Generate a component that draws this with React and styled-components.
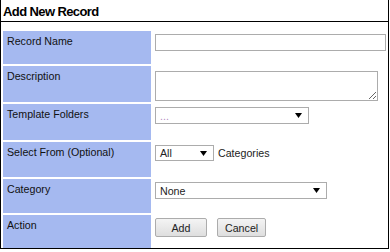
import styled, { createGlobalStyle } from 'styled-components'

const GlobalStyle = createGlobalStyle`
    body {
        margin: 0;
        background: #fff;
        font-family: 'Liberation Sans', Arial, sans-serif;
    }
`;

const Panel = styled.div`
    width: 389px;
    box-sizing: border-box;
    border: 1px solid #000;
    border-top: none;
    background: #fff;
`;

const Title = styled.h2`
    margin: 0;
    height: 22px;
    box-sizing: border-box;
    padding: 4px 2px 0;
    border-bottom: 1px solid #000;
    font-size: 13px;
    font-weight: bold;
    letter-spacing: -0.6px;
    color: #000;
`;

const Form = styled.div`
    display: grid;
    grid-template-columns: 148px 1fr;
    column-gap: 2px;
    row-gap: 2px;
    padding: 9px 2px 0;
`;

const Label = styled.div`
    height: ${p => p.h}px;
    box-sizing: border-box;
    padding: 4px 4px;
    background: #a5b9f0;
    font-size: 10.67px;
    color: #111;
`;

const Value = styled.div`
    height: ${p => p.h}px;
    box-sizing: border-box;
    padding: 3px 2px;
    display: flex;
    align-items: flex-start;
    gap: ${p => p.gap || 4}px;
    font-size: 10.67px;
    color: #222;
`;

const TextInput = styled.input`
    width: 231px;
    height: 17px;
    box-sizing: border-box;
    margin: 0;
    border: 1px solid #acacac;
    padding: 0 2px;
    font: inherit;
`;

const TextArea = styled.textarea`
    width: 223px;
    height: 30px;
    box-sizing: border-box;
    margin: 2px 0 0;
    border: 1px solid #acacac;
    padding: 1px 2px;
    font: inherit;
    resize: both;
`;

const Select = styled.div`
    width: ${p => p.w}px;
    height: ${p => p.tall ? 17 : 16}px;
    box-sizing: border-box;
    border: 1px solid #acacac;
    padding: 0 6px 0 4px;
    display: flex;
    align-items: center;
    justify-content: space-between;
    background: #fff;
    color: ${p => p.muted ? '#b48cc0' : '#222'};
    font-size: 10.67px;
`;

const Inline = styled.span`
    line-height: 16px;
`;

const Button = styled.button`
    height: 19px;
    min-width: ${p => p.min || 0}px;
    box-sizing: border-box;
    margin: 0;
    padding: 0 7px;
    border: 1px solid #acacac;
    border-radius: 2px;
    background: linear-gradient(#f4f4f4, #dedede);
    font-family: inherit;
    font-size: 10.67px;
    color: #222;
`;

const Arrow = () => (
    <svg width="7" height="5" viewBox="0 0 7 5">
        <polygon points="0,0 7,0 3.5,5" fill="#000" />
    </svg>
);

const App = () => {
    return (<>
        <GlobalStyle />
        <Panel>
            <Title>Add New Record</Title>
            <Form>
                <Label h={33}>Record Name</Label>
                <Value h={33}>
                    <TextInput />
                </Value>

                <Label h={36}>Description</Label>
                <Value h={36}>
                    <TextArea />
                </Value>

                <Label h={36}>Template Folders</Label>
                <Value h={36}>
                    <Select w={154} tall muted>... <Arrow /></Select>
                </Value>

                <Label h={35}>Select From (Optional)</Label>
                <Value h={35}>
                    <Select w={59}>All <Arrow /></Select>
                    <Inline>Categories</Inline>
                </Value>

                <Label h={34}>Category</Label>
                <Value h={34}>
                    <Select w={172} tall>None <Arrow /></Select>
                </Value>

                <Label h={33}>Action</Label>
                <Value h={33} gap={10}>
                    <Button min={52}>Add</Button>
                    <Button>Cancel</Button>
                </Value>
            </Form>
        </Panel>
    </>
    );
}

export default App
